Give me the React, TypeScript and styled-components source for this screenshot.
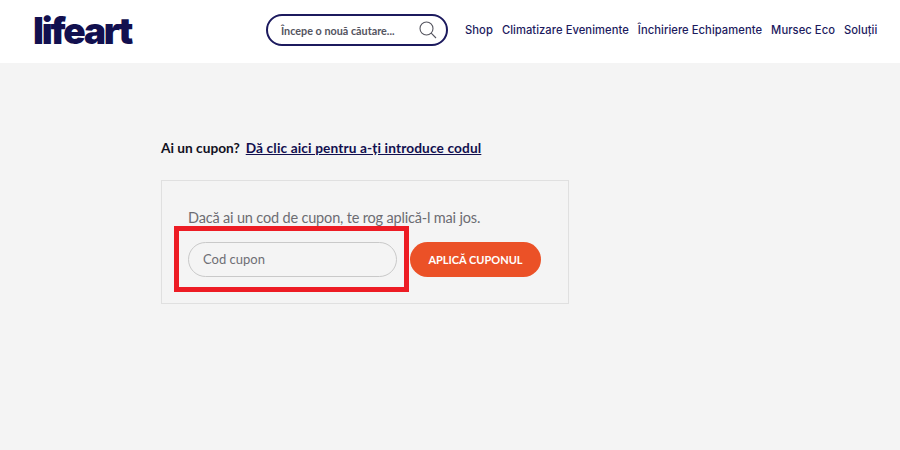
import React from "react";
import styled, { createGlobalStyle } from "styled-components";

const Global = createGlobalStyle`
  html, body { margin: 0; padding: 0; background: #f4f4f4; }
  body { font-family: "Lato", "Noto Sans", sans-serif; }
`;
const Page = styled.div`
  width: 900px; height: 450px; overflow: hidden; background: #f4f4f4;
`;
const Header = styled.header`
  height: 63px; background: #fff; display: flex; align-items: center;
  padding: 0 23px 3px 34px; box-sizing: border-box;
`;
const Logo = styled.div`
  flex: none; width: 232px; box-sizing: border-box; margin-left: -1px; margin-right: 1px;
  font-family: "Inter", sans-serif; font-weight: 900; font-size: 37px;
  letter-spacing: -2.2px; color: #12104f; line-height: 1;
`;
const Search = styled.div`
  flex: none; width: 182px; height: 32px; box-sizing: border-box; border: 2px solid #1c1a5e;
  border-radius: 16px; display: flex; align-items: center; justify-content: space-between;
  padding: 0 9px 0 13px; background: #fff; margin-right: 17px;
`;
const SearchText = styled.span`
  font-size: 10.8px; color: #55555f; font-weight: 700; white-space: nowrap;
`;
const Nav = styled.nav`
  display: flex; gap: 9px; font-family: "Inter", sans-serif; font-weight: 500;
  font-size: 11.2px; letter-spacing: 0.06px; color: #1c1a5e; white-space: nowrap;
`;
const NavItem = styled.span``;
const Main = styled.main`
  padding: 76px 0 0 161px;
`;
const Notice = styled.p`
  margin: 0 0 24px; font-size: 13.7px; line-height: 17px; font-weight: 700; color: #111122;
`;
const NoticeLink = styled.a`
  color: #12104f; text-decoration: underline; margin-left: 6px; letter-spacing: 0.13px;
`;
const Card = styled.section`
  position: relative; width: 408px; height: 124px; box-sizing: border-box;
  border: 1.5px solid #e0e0e0; padding: 28px 0 0 26px;
`;
const Hint = styled.p`
  margin: 0 0 15px; font-size: 14.5px; line-height: 18px; color: #6c6c72; letter-spacing: -0.17px;
`;
const Row = styled.div`
  display: flex; gap: 13px;
`;
const Input = styled.div`
  width: 209px; height: 35px; box-sizing: border-box; border: 1.5px solid #c9c9c9;
  border-radius: 18px; display: flex; align-items: center; padding: 0 0 1px 14px;
  font-size: 13px; color: #6f6f74;
`;
const Button = styled.button`
  width: 131px; height: 35px; border: 0; border-radius: 18px; background: #eb5127;
  color: #fff; font-family: inherit; font-weight: 700; font-size: 11px; padding: 0;
`;
const Highlight = styled.div`
  position: absolute; left: 12px; top: 45px; width: 235px; height: 66px;
  box-sizing: border-box; border: 5px solid #ed1c24; pointer-events: none;
`;

export default function App() {
  return (
    <Page>
      <Global />
      <Header>
        <Logo>lifeart</Logo>
        <Search>
          <SearchText>Începe o nouă căutare...</SearchText>
          <svg width="18" height="18" viewBox="0 0 18 18" fill="none" stroke="#55555f" strokeWidth="1.1">
            <circle cx="7.5" cy="7.5" r="6.5" />
            <path d="M12.2 12.2L17 17" />
          </svg>
        </Search>
        <Nav>
          <NavItem>Shop</NavItem>
          <NavItem>Climatizare Evenimente</NavItem>
          <NavItem>Închiriere Echipamente</NavItem>
          <NavItem>Mursec Eco</NavItem>
          <NavItem>Soluții</NavItem>
        </Nav>
      </Header>
      <Main>
        <Notice>
          Ai un cupon?
          <NoticeLink href="#">Dă clic aici pentru a-ți introduce codul</NoticeLink>
        </Notice>
        <Card>
          <Hint>Dacă ai un cod de cupon, te rog aplică-l mai jos.</Hint>
          <Row>
            <Input>Cod cupon</Input>
            <Button>APLICĂ CUPONUL</Button>
          </Row>
          <Highlight />
        </Card>
      </Main>
    </Page>
  );
}
